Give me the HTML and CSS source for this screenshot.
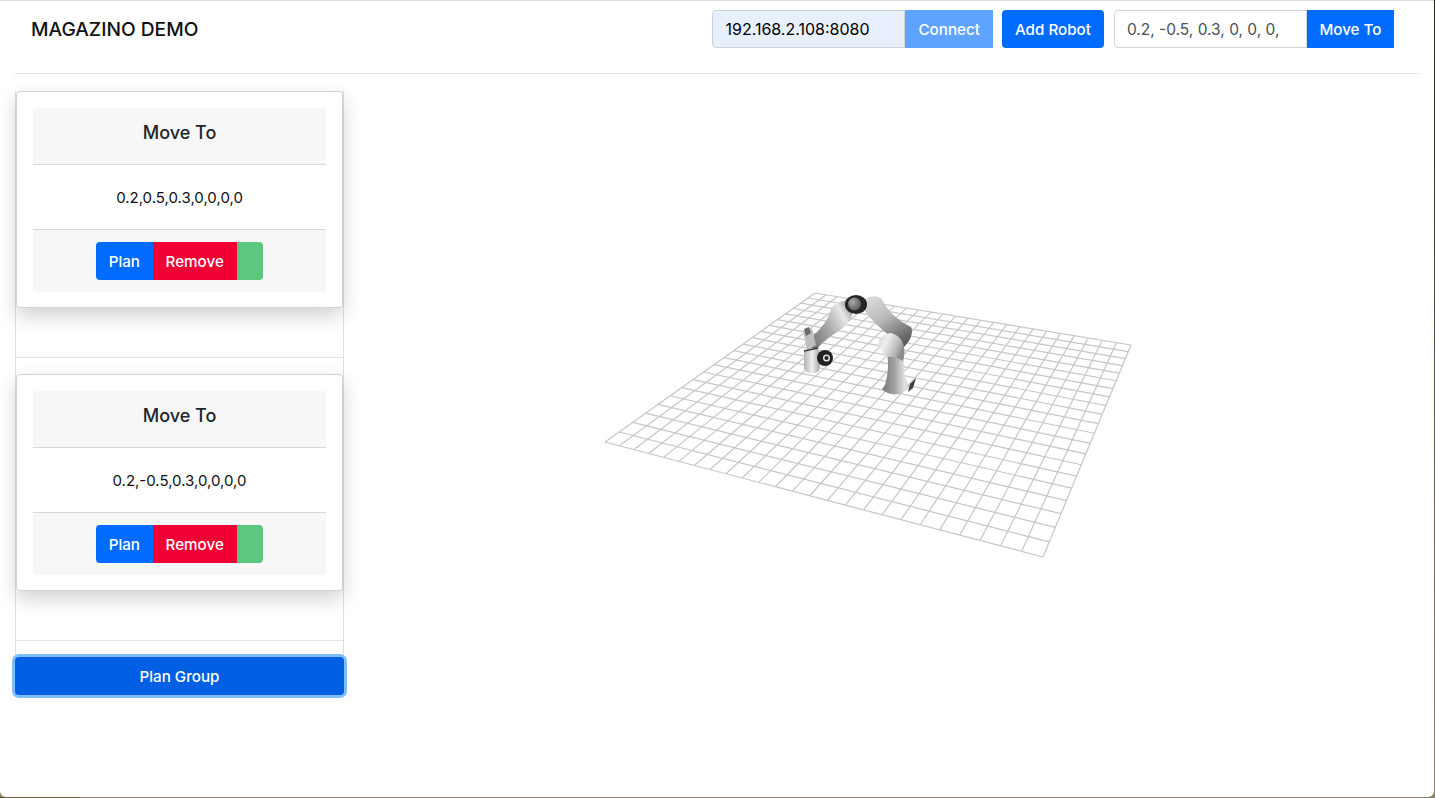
FILE: index.html
```html
<!DOCTYPE html>
<html lang="en">
<head>
    <meta charset="UTF-8">
    <meta name="viewport" content="width=device-width, initial-scale=1.0">
    <title>Magazino Demo</title>
    <link rel="stylesheet" href="styles.css">
</head>
<body>
    <div class="window">
        <header class="topbar">
            <span class="brand">MAGAZINO DEMO</span>
            <div class="controls">
                <div class="input-group">
                    <input class="field field-autofill" type="text" value="192.168.2.108:8080">
                    <button class="btn btn-blue btn-square btn-faded" type="button">Connect</button>
                </div>
                <button class="btn btn-blue btn-add" type="button">Add Robot</button>
                <div class="input-group">
                    <input class="field" type="text" value="0.2, -0.5, 0.3, 0, 0, 0,">
                    <button class="btn btn-blue btn-square btn-narrow" type="button">Move To</button>
                </div>
            </div>
        </header>

        <div class="content">
            <aside class="sidebar">
                <ul class="steps">
                    <li class="step">
                        <div class="card">
                            <h5 class="card-header">Move To</h5>
                            <p class="card-body">0.2,0.5,0.3,0,0,0,0</p>
                            <div class="card-footer">
                                <div class="btn-group">
                                    <button class="btn btn-blue btn-narrow" type="button">Plan</button>
                                    <button class="btn btn-red" type="button">Remove</button>
                                    <button class="btn btn-green" type="button"></button>
                                </div>
                            </div>
                        </div>
                    </li>
                    <li class="step">
                        <div class="card">
                            <h5 class="card-header">Move To</h5>
                            <p class="card-body">0.2,-0.5,0.3,0,0,0,0</p>
                            <div class="card-footer">
                                <div class="btn-group">
                                    <button class="btn btn-blue btn-narrow" type="button">Plan</button>
                                    <button class="btn btn-red" type="button">Remove</button>
                                    <button class="btn btn-green" type="button"></button>
                                </div>
                            </div>
                        </div>
                    </li>
                </ul>
                <button class="btn btn-plan-group" type="button">Plan Group</button>
            </aside>

            <main class="scene">
                <!-- viewBox uses page coordinates, so the numbers read off the screenshot work as they are -->
                <svg class="scene-canvas" viewBox="344 91 1090 660">
                    <defs>
                        <linearGradient id="columnShade" x1="0" y1="0" x2="1" y2="0">
                            <stop offset="0" stop-color="#777777"/>
                            <stop offset="0.45" stop-color="#a0a0a0"/>
                            <stop offset="0.85" stop-color="#e2e2e2"/>
                            <stop offset="1" stop-color="#c8c8c8"/>
                        </linearGradient>
                        <linearGradient id="elbowShade" x1="0" y1="0" x2="1" y2="0.5">
                            <stop offset="0" stop-color="#d4d4d4"/>
                            <stop offset="0.35" stop-color="#eeeeee"/>
                            <stop offset="0.75" stop-color="#bcbcbc"/>
                            <stop offset="1" stop-color="#8c8c8c"/>
                        </linearGradient>
                        <linearGradient id="upperShade" x1="0.1" y1="0" x2="0.65" y2="1">
                            <stop offset="0" stop-color="#dcdcdc"/>
                            <stop offset="0.45" stop-color="#bababa"/>
                            <stop offset="1" stop-color="#5c5c5c"/>
                        </linearGradient>
                        <linearGradient id="foreShade" x1="0" y1="0.9" x2="1" y2="0.3">
                            <stop offset="0" stop-color="#6a6a6a"/>
                            <stop offset="0.5" stop-color="#a8a8a8"/>
                            <stop offset="0.85" stop-color="#e8e8e8"/>
                            <stop offset="1" stop-color="#aaaaaa"/>
                        </linearGradient>
                        <linearGradient id="wristShade" x1="0" y1="0" x2="1" y2="0">
                            <stop offset="0" stop-color="#b4b4b4"/>
                            <stop offset="0.5" stop-color="#eeeeee"/>
                            <stop offset="1" stop-color="#a0a0a0"/>
                        </linearGradient>
                        <radialGradient id="ballShade" cx="0.35" cy="0.35" r="0.8">
                            <stop offset="0" stop-color="#a8a8a8"/>
                            <stop offset="1" stop-color="#505050"/>
                        </radialGradient>
                        <filter id="soften"><feGaussianBlur stdDeviation="0.5"/></filter>
                    </defs>
                    <g id="grid" class="grid-lines"></g>
                    <g filter="url(#soften)">
                        <path d="M910 384 L916 378 L913 388 L908 392 Z" fill="#3d3d3d"/>
                        <path d="M885 385 C888 374 889 364 887 354 L884 346 L903 343 C904 352 903 364 905 376 L909 387 C904 396 889 397 882 389 Z" fill="url(#columnShade)"/>
                        <path d="M864 300 C871 295 880 295 883 301 C888 311 897 320 911 327 C914 332 910 342 903 348 C899 340 894 335 889 335 C881 329 872 321 864 310 Z" fill="url(#upperShade)"/>
                        <path d="M879 344 C878 338 884 334 891 333 C899 335 903 341 904 347 C905 352 904 358 903 361 C898 358 892 356 888 357 C884 354 880 350 879 344 Z" fill="url(#elbowShade)"/>
                        <path d="M846 301 C838 301 832 305 830 312 C827 322 820 329 812 337 L807 344 L816 351 C820 344 826 339 832 335 C842 330 851 322 853 312 Z" fill="url(#foreShade)"/>
                        <ellipse cx="856" cy="304.5" rx="11" ry="9.5" fill="#262626"/>
                        <circle cx="854.5" cy="304" r="6.5" fill="url(#ballShade)"/>
                        <path d="M803 331 L812 328 L816 345 L807 350 Z" fill="#bebebe"/>
                        <path d="M804 329 L809 327 L811 333 L806 336 Z" fill="#6a6a6a"/>
                        <path d="M804 351 L818 348 C821 354 821 362 819 371 C814 375 807 374 804 369 Z" fill="url(#wristShade)"/>
                        <path d="M804 351 L818 348" stroke="#3a3a3a" stroke-width="1.4" fill="none"/>
                        <circle cx="825" cy="358" r="8" fill="#222"/>
                        <circle cx="826.5" cy="358" r="2.8" fill="none" stroke="#e4e4e4" stroke-width="1.5"/>
                    </g>
                </svg>
            </main>
        </div>
    </div>
    <script src="grid.js"></script>
</body>
</html>
```

FILE: styles.css
```css
* {
    box-sizing: border-box;
}
html, body {
    height: 798px;
    margin: 0;
    overflow: hidden;
}
body {
    font-family: Inter, "Liberation Sans", sans-serif;
    font-size: 16px;
    line-height: 1.5;
    color: #212529;
    background:
        linear-gradient(90deg, #6e5c3a 80px, #85826f 80px) bottom / 100% 1px no-repeat,
        linear-gradient(180deg, #26251c, #8f8768);
}
button, input {
    font: inherit;
}
.window {
    width: 1434px;
    height: 797px;
    background: #fff;
    border-top: 1px solid #dcdce0;
    border-radius: 0 0 6px 6px;
}

/* top bar */
.topbar {
    display: flex;
    justify-content: space-between;
    align-items: flex-start;
    height: 73px;
    margin: 0 15px 0 15px;
    padding: 9px 25px 0 16px;
    border-bottom: 1px solid #e3e3e6;
}
.brand {
    font-size: 19.2px;
    font-weight: 500;
    line-height: 38px;
    color: #111;
}
.controls {
    display: flex;
    gap: 10px;
}
.input-group {
    display: flex;
}
.field {
    width: 193px;
    height: 38px;
    padding: 6px 12px;
    font-size: 15.5px;
    color: #495057;
    background: #fff;
    border: 1px solid #ced4da;
    border-radius: 4px 0 0 4px;
}
.field-autofill {
    font-size: 16px;
    color: #000;
    background: #e8f0fe;
}

/* buttons */
.btn {
    height: 38px;
    padding: 7px 12px 5px;
    font-size: 15.2px;
    font-weight: 450;
    color: #fff;
    border: 1px solid transparent;
    border-radius: 4px;
    white-space: nowrap;
}
.btn-narrow {
    padding-left: 11.5px;
    padding-right: 11.5px;
}
.btn-blue {
    background: #006cff;
}
.btn-red {
    background: #f00035;
}
.btn-green {
    width: 25.5px;
    background: #5cc87e;
}
.btn-square {
    border-radius: 0;
}
.btn-faded {
    background: #5ea3ff;
}
.btn-add {
    margin-left: -1px;
}
.btn-group {
    display: inline-flex;
}
.btn-group .btn {
    border-radius: 0;
}
.btn-group .btn:first-child {
    border-radius: 4px 0 0 4px;
}
.btn-group .btn:last-child {
    border-radius: 0 4px 4px 0;
}
.btn-plan-group {
    display: block;
    width: 100%;
    color: #fff;
    background: #005fe2;
    box-shadow: 0 0 0 3px #80bdff;
}

/* sidebar */
.content {
    display: flex;
    margin-top: 17px;
}
.sidebar {
    flex: 0 0 329px;
    margin-left: 15px;
}
.steps {
    margin: 0;
    padding: 0 0 16px;
    list-style: none;
    border-left: 1px solid #dfdfdf;
    border-right: 1px solid #dfdfdf;
}
.step {
    padding-bottom: 49px;
    border-bottom: 1px solid #e3e3e6;
}
.step + .step {
    padding-top: 16px;
}
.card {
    height: 217px;
    padding: 16px 16px 15px;
    background: #fff;
    border: 1px solid #d2d2d2;
    border-radius: 4px;
    box-shadow: 0 8px 20px rgba(0, 0, 0, 0.18);
}
.card-header {
    height: 57px;
    margin: 0;
    font-size: 18px;
    font-weight: 500;
    line-height: 49px;
    text-align: center;
    background: #f7f7f7;
    border-bottom: 1px solid #d8d8d8;
    border-radius: 3px 3px 0 0;
}
.card-body {
    height: 64px;
    margin: 0;
    font-size: 15px;
    line-height: 65px;
    text-align: center;
    color: #111;
}
.card-footer {
    height: 63px;
    padding-top: 12px;
    text-align: center;
    background: #f7f7f7;
    border-top: 1px solid #d8d8d8;
    border-radius: 0 0 3px 3px;
}

/* 3d view */
.scene {
    flex: 1;
}
.scene-canvas {
    display: block;
    width: 1090px;
    height: 660px;
}
.grid-lines line {
    stroke: #c6c6c6;
    stroke-width: 1.2;
}
```

FILE: grid.js
```js
// floor grid of the robot view, projected from the four corners of the plane
const corners = [[815, 293], [1131, 345], [1043, 557], [605, 442]];
const columns = 25;
const rows = 21;

// homography of the unit square onto the corners
function makeProjection(p) {
    const [x0, y0] = p[0], [x1, y1] = p[1], [x2, y2] = p[2], [x3, y3] = p[3];
    const dx1 = x1 - x2, dx2 = x3 - x2, sx = x0 - x1 + x2 - x3;
    const dy1 = y1 - y2, dy2 = y3 - y2, sy = y0 - y1 + y2 - y3;
    const det = dx1 * dy2 - dx2 * dy1;
    const g = (sx * dy2 - dx2 * sy) / det;
    const h = (dx1 * sy - sx * dy1) / det;
    return (u, v) => {
        const w = g * u + h * v + 1;
        return [
            ((x1 - x0 + g * x1) * u + (x3 - x0 + h * x3) * v + x0) / w,
            ((y1 - y0 + g * y1) * u + (y3 - y0 + h * y3) * v + y0) / w
        ];
    };
}

const project = makeProjection(corners);
const grid = document.getElementById("grid");

function addLine(a, b) {
    const line = document.createElementNS("http://www.w3.org/2000/svg", "line");
    line.setAttribute("x1", a[0]);
    line.setAttribute("y1", a[1]);
    line.setAttribute("x2", b[0]);
    line.setAttribute("y2", b[1]);
    grid.appendChild(line);
}

for (let i = 0; i <= columns; i++) {
    addLine(project(i / columns, 0), project(i / columns, 1));
}
for (let i = 0; i <= rows; i++) {
    addLine(project(0, i / rows), project(1, i / rows));
}
```
